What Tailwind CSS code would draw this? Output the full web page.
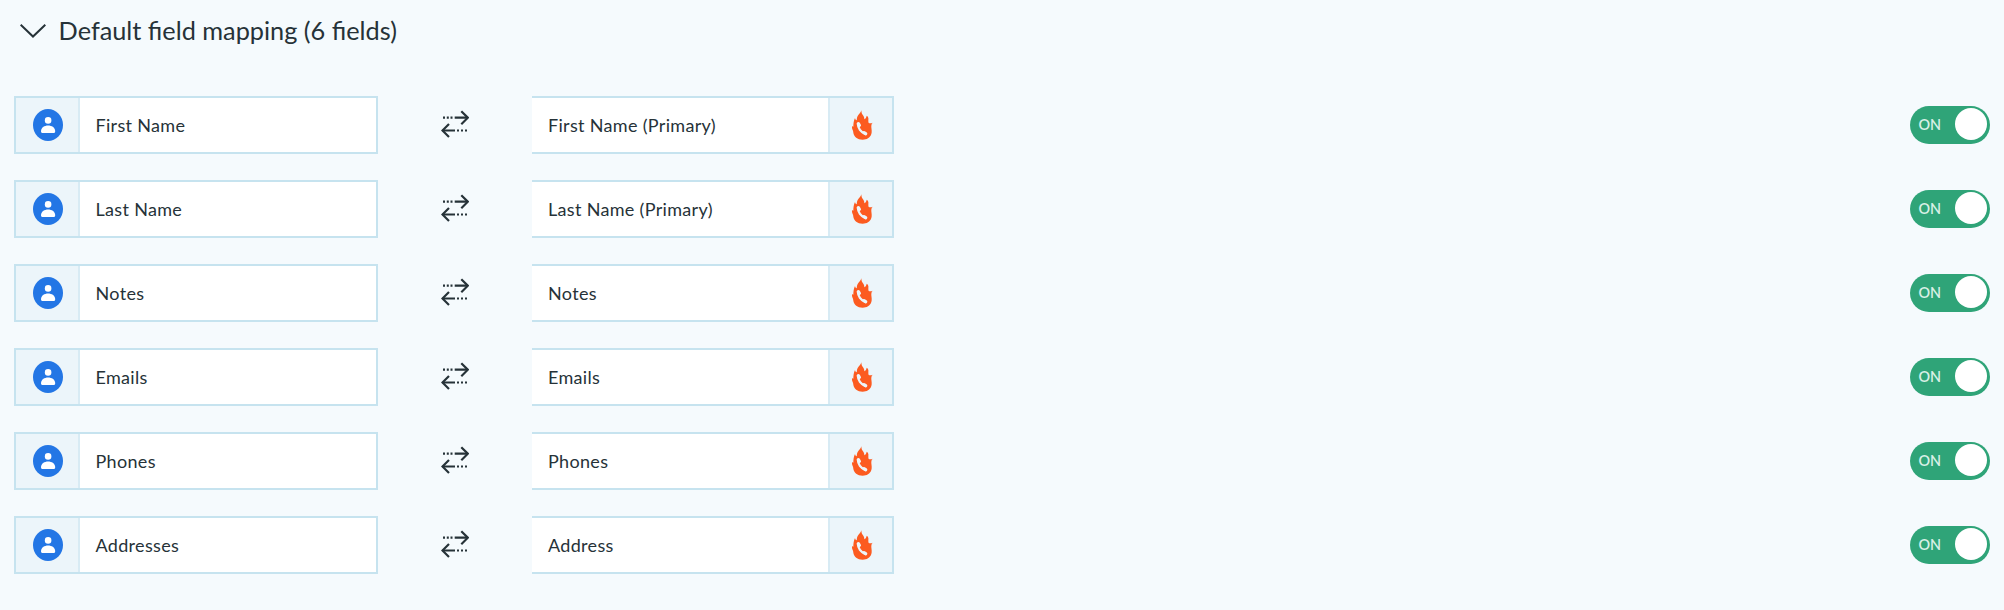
<!DOCTYPE html>
<html lang="en">
<head>
  <meta charset="UTF-8">
  <meta name="viewport" content="width=device-width, initial-scale=1.0">
  <title>Default field mapping</title>
  <script src="https://cdn.jsdelivr.net/npm/@tailwindcss/browser@4"></script>
</head>
<body class="bg-[#f5fafd] text-[#263238] font-['Lato',sans-serif] min-h-screen">
  <!-- icons -->
  <svg class="hidden">
    <symbol id="contact" viewBox="0 0 30 32">
      <ellipse cx="15" cy="16" rx="15" ry="16" fill="#2376e5"/>
      <circle cx="15.1" cy="11.4" r="3.3" fill="#fff"/>
      <path d="M8 22.4c0-4 3.4-6 7.1-6s7.1 2 7.1 6c0 .9-.6 1.5-1.5 1.5H9.500c-.9 0-1.500-.6-1.500-1.500z" fill="#fff"/>
    </symbol>
    <symbol id="sync" viewBox="0 0 28 28">
      <g fill="none" stroke="#263238" stroke-width="2.2">
        <path d="M2 7.700h2M5.800 7.700h2M9.500 7.700h2M13.700 7.700h13M16 20.500h2M20 20.500h2M24 20.500h2M1.500 20.500H14"/>
        <path d="M20.300 1.200l6.500 6.500-6.500 6.500M8 14l-6.500 6.500L8 27"/>
      </g>
    </symbol>
    <symbol id="flame" viewBox="96 74 63 90">
      <path fill="#fc5b20" d="M124 75c0 7 2 11 5 15 3 4 4 8 4 12 4-2 6-5 7-11 5 3 6 8 5 13 0 4 0 7 1 9 4 1 8 1 12-1-4 4-4 8-4 14 1 8 2 14 0 20-4 12-14 17-26 17-16 0-26-9-28-21 0-5-3-9-4-14 0-2 0-4 1-6l3 2c0-8 1-18 5-26 1 4 2 6 5 7 1-4 0-8 3-13 4-6 9-9 11-17z"/>
      <path fill="none" stroke="#ecf5fa" stroke-width="7" stroke-linecap="round" d="M114 117c0 11 8 24 22 29"/>
      <path fill="none" stroke="#ecf5fa" stroke-width="10" stroke-linecap="round" d="M115 115l3 5M132 142l5 3"/>
    </symbol>
  </svg>

  <div class="flex items-center h-[62px] pl-5">
    <svg class="w-[26px] h-[14px] shrink-0" viewBox="0 0 26 14" fill="none" stroke="#263238" stroke-width="2"><path d="M.7.800L13 12.500 25.300.800"/></svg>
    <h1 class="ml-[12.6px] text-[25.3px] leading-none whitespace-nowrap">Default field mapping (6 fields)</h1>
  </div>

  <div id="rows" class="flex flex-col gap-[26px] pt-[34px] pl-[14px] pr-[14px]"></div>

  <template id="row">
    <div class="flex items-center h-[58px]">
      <div class="flex w-[364px] h-full border-2 border-[#c6e3ef] bg-white">
        <div class="flex items-center w-16 pl-[17px] bg-[#ecf5fa] border-r-2 border-[#d8ebf4]">
          <svg class="w-[30px] h-8"><use href="#contact"/></svg>
        </div>
        <span class="source pl-[15.5px] self-center text-[18px] leading-none tracking-[0.32px]"></span>
      </div>
      <div class="w-[154px] flex justify-center pb-0.5">
        <svg class="w-7 h-7"><use href="#sync"/></svg>
      </div>
      <div class="flex w-[362px] h-full border-y-2 border-r-2 border-[#c6e3ef] bg-white">
        <span class="target flex-1 pl-4 self-center text-[18px] leading-none tracking-[0.32px]"></span>
        <div class="flex items-center w-16 pl-[22px] bg-[#ecf5fa] border-l-2 border-[#d8ebf4]">
          <svg class="w-[21px] h-[30px]"><use href="#flame"/></svg>
        </div>
      </div>
      <button class="ml-auto flex items-center justify-between w-20 h-[38px] rounded-full bg-[#2fa478] pl-[8.5px] pr-[3px]">
        <span class="text-[14.4px] leading-none font-semibold text-[#d8f0e6]">ON</span>
        <span class="size-8 rounded-full bg-white -mt-0.5"></span>
      </button>
    </div>
  </template>

  <script>
    const fields = [
      ['First Name', 'First Name (Primary)'],
      ['Last Name', 'Last Name (Primary)'],
      ['Notes', 'Notes'],
      ['Emails', 'Emails'],
      ['Phones', 'Phones'],
      ['Addresses', 'Address'],
    ];
    const rows = document.getElementById('rows');
    const template = document.getElementById('row');

    fields.forEach(([source, target]) => {
      const row = template.content.cloneNode(true);
      row.querySelector('.source').textContent = source;
      row.querySelector('.target').textContent = target;
      rows.appendChild(row);
    });
  </script>
</body>
</html>
